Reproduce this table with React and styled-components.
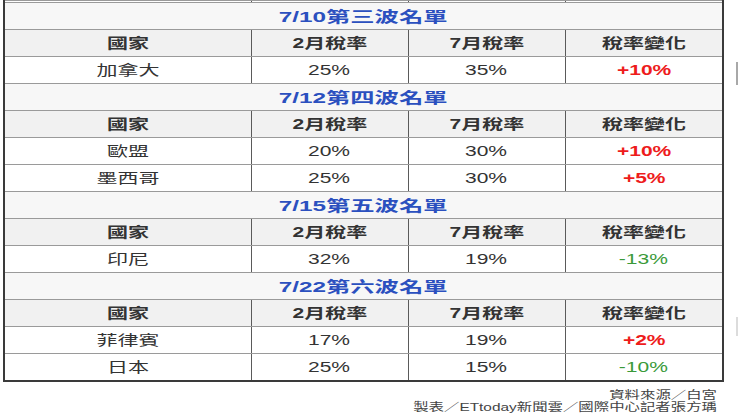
import React from 'react';
import styled, { createGlobalStyle } from 'styled-components';

const GlobalStyle = createGlobalStyle`
  html, body {
    margin: 0;
    padding: 0;
    background: #ffffff;
  }
  body {
    font-family: "Liberation Sans", "Noto Sans CJK TC", sans-serif;
    color: #333333;
  }
`;

const Page = styled.div`
  width: 740px;
  height: 416px;
  display: flex;
  overflow: hidden;
`;

const Main = styled.div`
  padding-left: 3px;
  width: 719px;
  display: flex;
  flex-direction: column;
`;

const Rail = styled.div`
  flex: 1;
  display: flex;
  flex-direction: column;
  align-items: flex-end;
  padding-top: 62px;
  padding-right: 2px;
`;

const Mark = styled.div`
  width: 2px;
  height: ${(p) => p.h}px;
  margin-bottom: ${(p) => p.gap}px;
  background: ${(p) => p.color};
`;

const Table = styled.table`
  width: 719px;
  border-collapse: collapse;
  table-layout: fixed;
  border: 2px solid #3a3a3a;
  border-top: none;
`;

const Row = styled.tr`
  height: ${(p) => p.h || 27}px;
  background: ${(p) => p.bg || '#ffffff'};
`;

const Cell = styled.td`
  padding: 0;
  text-align: center;
  vertical-align: middle;
  border-top: 1px solid #9a9a9a;
  border-bottom: 1px solid #9a9a9a;
  border-left: 1.5px solid #5a5a5a;
  font-size: 14px;
  line-height: 14px;
  font-weight: ${(p) => (p.bold ? 700 : 400)};
  color: ${(p) => p.color || '#333333'};
`;

const TitleCell = styled.td`
  padding: 0;
  text-align: center;
  vertical-align: middle;
  border-top: 1px solid #9a9a9a;
  border-bottom: 1px solid #9a9a9a;
  font-size: 15px;
  line-height: 15px;
  font-weight: 700;
  color: #2b50bf;
`;

const Wide = styled.span`
  display: inline-block;
  transform: scaleX(${(p) => p.k || 1.5});
  transform-origin: ${(p) => p.origin || 'center'};
`;

const Footer = styled.div`
  margin-top: 7px;
  padding-right: 5px;
  display: flex;
  flex-direction: column;
  align-items: flex-end;
  font-size: 11px;
  line-height: 12px;
  color: #444444;
`;

const cols = [247, 157, 157, 158];

const waves = [
  {
    title: '7/10第三波名單',
    rows: [['加拿大', '25%', '35%', '+10%']],
  },
  {
    title: '7/12第四波名單',
    rows: [
      ['歐盟', '20%', '30%', '+10%'],
      ['墨西哥', '25%', '30%', '+5%'],
    ],
  },
  {
    title: '7/15第五波名單',
    rows: [['印尼', '32%', '19%', '-13%']],
  },
  {
    title: '7/22第六波名單',
    rows: [
      ['菲律賓', '17%', '19%', '+2%'],
      ['日本', '25%', '15%', '-10%'],
    ],
  },
];

const heads = ['國家', '2月稅率', '7月稅率', '稅率變化'];

const Wave = ({ wave }) => (
  <>
    <Row bg="#f7f7f7">
      <TitleCell colSpan={4}>
        <Wide k={1.62}>{wave.title}</Wide>
      </TitleCell>
    </Row>
    <Row bg="#f1f1f1">
      {heads.map((h) => (
        <Cell key={h} bold>
          <Wide>{h}</Wide>
        </Cell>
      ))}
    </Row>
    {wave.rows.map((r) => (
      <Row key={r[0]}>
        <Cell>
          <Wide>{r[0]}</Wide>
        </Cell>
        <Cell>
          <Wide>{r[1]}</Wide>
        </Cell>
        <Cell>
          <Wide>{r[2]}</Wide>
        </Cell>
        <Cell
          bold={r[3].startsWith('+')}
          color={r[3].startsWith('+') ? '#ee1c1c' : '#3a9a3a'}
        >
          <Wide>{r[3]}</Wide>
        </Cell>
      </Row>
    ))}
  </>
);

const App = () => (
  <Page>
    <GlobalStyle />
    <Main>
      <Table>
        <colgroup>
          {cols.map((w, i) => (
            <col key={i} style={{ width: w }} />
          ))}
        </colgroup>
        <tbody>
          <Row h={2}>
            <Cell />
            <Cell />
            <Cell />
            <Cell />
          </Row>
          {waves.map((w) => (
            <Wave key={w.title} wave={w} />
          ))}
        </tbody>
      </Table>
      <Footer>
        <Wide k={1.4} origin="right">資料來源／白宮</Wide>
        <Wide k={1.4} origin="right">製表／ETtoday新聞雲／國際中心記者張方瑀</Wide>
      </Footer>
    </Main>
    <Rail>
      <Mark h={23} gap={232} color="#a8a8a8" />
      <Mark h={19} gap={0} color="#dcdcdc" />
    </Rail>
  </Page>
);

export default App;
